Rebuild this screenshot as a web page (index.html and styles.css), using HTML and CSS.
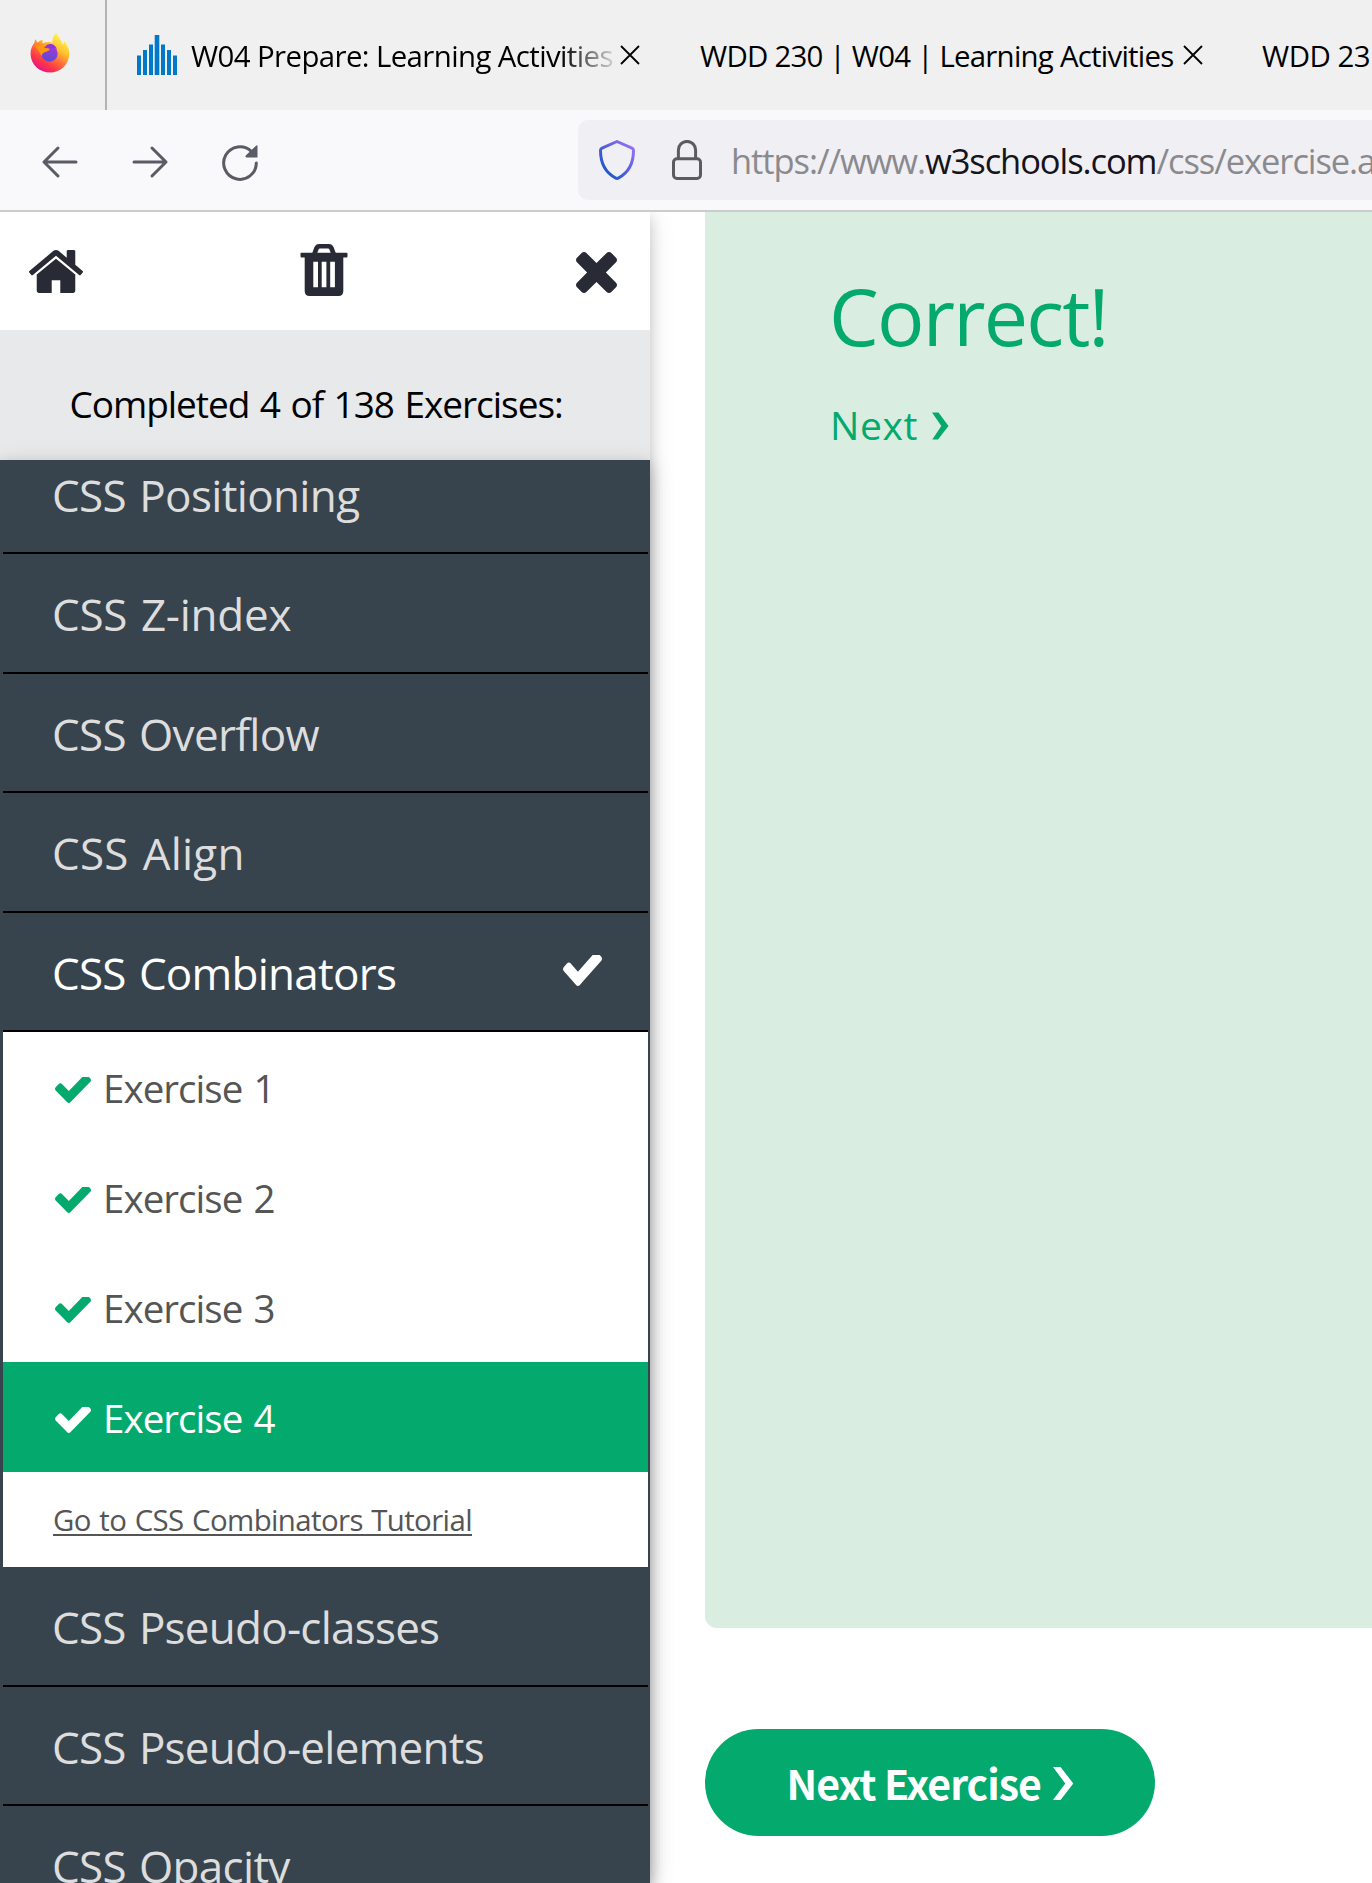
FILE: index.html
```html
<!DOCTYPE html>
<html lang="en">
<head>
<meta charset="utf-8">
<title>Exercise</title>
<link rel="stylesheet" href="styles.css">
</head>
<body>
<svg class="defs" width="0" height="0" aria-hidden="true">
  <symbol id="check" viewBox="121 434 1550 1088" preserveAspectRatio="none">
    <path d="M1671 566q0 40-28 68L919 1358l-136 136q-28 28-68 28t-68-28L511 1358 149 996q-28-28-28-68t28-68l136-136q28-28 68-28t68 28l294 295 656-657q28-28 68-28t68 28l136 136q28 28 28 68z"/>
  </symbol>
</svg>

<nav class="tabs">
  <div class="pinned">
    <svg width="40" height="40" viewBox="0 0 40 40">
      <defs>
        <linearGradient id="fox" x1=".8" y1=".1" x2=".25" y2=".95">
          <stop offset="0" stop-color="#fff44f"/><stop offset=".3" stop-color="#ffc22e"/><stop offset=".55" stop-color="#ff7139"/><stop offset=".78" stop-color="#ff3647"/><stop offset="1" stop-color="#e31587"/>
        </linearGradient>
        <linearGradient id="globe" x1=".7" y1="0" x2=".4" y2="1">
          <stop offset="0" stop-color="#a737dd"/><stop offset="1" stop-color="#5a4bd0"/>
        </linearGradient>
      </defs>
      <path fill="url(#fox)" d="M26 0c2 3 5 6 6.500 11.500 1.200-.6 1.500-1.800 1.300-3.500C37.500 11.500 39.500 16 39.300 21 39 31.500 30.500 39.500 20 39.500S.6 31.500.6 21C.6 15.500 2.500 12.500 4.500 9.500 4.600 8 5 7 5.500 6.300L7.500 9.500C9 8.300 10.500 7.200 12.500 7v3.500c4-2 8.500-1.500 10-.8C22 6 23.500 2.500 26 0z"/>
      <circle cx="19.500" cy="20.500" r="8.200" fill="url(#globe)"/>
      <path fill="#ff980e" d="M5 12l8-1c-.5 2 .5 3.500 2.500 4l4.500.6c-.5 2-2 2.600-4.500 3.400-2 .8-3.500 1.500-3.800 4z"/>
      <path fill="#8f35d8" d="M16 12.500c4-3 9-1.500 11 3.500-3-2-5.500-1-8-.5z"/>
    </svg>
  </div>
  <div class="tab tab-first">
    <svg class="favicon" width="40" height="40" viewBox="0 0 40 40" fill="#0079cb">
      <path d="M0 20.500h4V40H0zM6 15h4v25H6zM12 9.500h4V40h-4zM17.700 0h4.600v40h-4.600zM24 9.500h4V40h-4zM30 15h4v25h-4zM36 20.500h4V40h-4z"/>
    </svg>
    <span class="tab-title fade">W04 Prepare: Learning Activities</span>
    <svg class="close" width="20" height="20" viewBox="0 0 20 20"><path d="M1 1l18 18M19 1L1 19"/></svg>
  </div>
  <div class="tab tab-second">
    <span class="tab-title wide">WDD 230 | W04 | Learning Activities</span>
    <svg class="close" width="20" height="20" viewBox="0 0 20 20"><path d="M1 1l18 18M19 1L1 19"/></svg>
  </div>
  <div class="tab tab-third"><span class="tab-title">WDD 23</span></div>
</nav>

<header class="toolbar">
  <div class="buttons">
    <svg width="36" height="36" viewBox="0 0 36 36"><path d="M16 4L2 18l14 14M2 18h32"/></svg>
    <svg width="36" height="36" viewBox="0 0 36 36"><path d="M20 4l14 14-14 14M34 18H2"/></svg>
    <svg width="36" height="36" viewBox="0 0 36 36"><path d="M29.300 7.300A16.300 16.300 0 1 0 34.300 19"/><path class="solid" d="M35.500 1.500V13.500H24.500q-2-.5-.5-2.200L34 1.800q1-.8 1.500-.3z"/></svg>
  </div>
  <div class="urlbar">
    <svg class="shield" width="36" height="40" viewBox="0 0 36 40">
      <defs><linearGradient id="sh" x1=".9" y1=".1" x2=".2" y2=".8"><stop offset="0" stop-color="#9470f5"/><stop offset=".5" stop-color="#5d60e2"/><stop offset="1" stop-color="#2558cc"/></linearGradient></defs>
      <path fill="none" stroke="url(#sh)" stroke-width="3" stroke-linejoin="round" d="M18 1.500l15 6.600q1.500.7 1.500 2.400C34.500 24 29 33 19.200 38.100q-1.200.6-2.400 0C7 33 1.500 24 1.500 10.500q0-1.700 1.500-2.400z"/>
    </svg>
    <svg class="lock" width="30" height="40" viewBox="0 0 30 40"><path d="M6.400 18V10a8.600 8.600 0 0 1 17.200 0v8"/><rect x="1.500" y="18.800" width="27" height="19.700" rx="3.500"/></svg>
    <span class="url">https://www.<b>w3schools.com</b>/css/exercise.a</span>
  </div>
</header>

<div class="page">
  <aside class="sidebar">
    <div class="tools">
      <svg width="54" height="43" viewBox="89 253 1614 1283" preserveAspectRatio="none"><path d="M1472 992v480q0 26-19 45t-45 19h-384v-384H768v384H384q-26 0-45-19t-19-45V992q0-1 .5-3t.5-3l575-474 575 474q1 2 1 6zm223-69l-62 74q-8 9-21 11h-3q-13 0-21-7L896 424l-692 577q-12 8-24 7-13-2-21-11l-62-74q-8-10-7-23.500T101 878l719-599q32-26 76-26t76 26l244 204V288q0-14 9-23t23-9h192q14 0 23 9t9 23v408l219 182q10 8 11 21.500t-7 23.500z"/></svg>
      <svg class="trash" width="48" height="52" viewBox="0 0 48 52"><path fill-rule="evenodd" d="M1 8.700H12.300L14.500 3Q16 0 19 0H29Q32 0 33.500 3L35.700 8.700H46.500Q47.500 8.700 47.500 9.700V12.500Q47.500 13.500 46.500 13.500H43.300V47Q43.300 52 38.500 52H9.500Q4.700 52 4.700 47V13.500H1.500Q.5 13.500.5 12.500V9.700Q.5 8.700 1 8.700zM17.300 8.700H30.700L29.300 5.200Q29 4.500 28 4.500H20Q19 4.500 18.700 5.200zM13.300 17.700V43.300H18V17.700zM21.700 17.700V43.300H26.400V17.700zM30.200 17.700V43.300H34.900V17.700z"/></svg>
      <svg class="times" width="41" height="41" viewBox="302 366 1188 1188"><path d="M1490 1322q0 40-28 68l-136 136q-28 28-68 28t-68-28L896 1232l-294 294q-28 28-68 28t-68-28l-136-136q-28-28-28-68t28-68l294-294-294-294q-28-28-28-68t28-68l136-136q28-28 68-28t68 28l294 294 294-294q28-28 68-28t68 28l136 136q28 28 28 68t-28 68l-294 294 294 294q28 28 28 68z"/></svg>
    </div>
    <div class="progress">Completed 4 of 138 Exercises:</div>
    <div class="list">
      <div class="items">
        <a class="topic positioning">CSS Positioning</a>
        <a class="topic zindex">CSS Z-index</a>
        <a class="topic overflow">CSS Overflow</a>
        <a class="topic align">CSS Align</a>
        <a class="topic active">CSS Combinators<svg width="39" height="31"><use href="#check"/></svg></a>
        <div class="sub">
          <a class="exercise"><svg width="36" height="26"><use href="#check"/></svg>Exercise 1</a>
          <a class="exercise"><svg width="36" height="26"><use href="#check"/></svg>Exercise 2</a>
          <a class="exercise"><svg width="36" height="26"><use href="#check"/></svg>Exercise 3</a>
          <a class="exercise current"><svg width="36" height="26"><use href="#check"/></svg>Exercise 4</a>
          <a class="tutorial"><span>Go to CSS Combinators Tutorial</span></a>
        </div>
        <a class="topic">CSS Pseudo-classes</a>
        <a class="topic">CSS Pseudo-elements</a>
        <a class="topic overflow">CSS Opacity</a>
      </div>
    </div>
  </aside>
  <main class="content">
    <section class="result">
      <h2>Correct!</h2>
      <a class="next">Next<svg width="17" height="28" viewBox="0 0 17 28"><path d="M0 .5h6.500L16.500 14 6 27.500H.3L9.300 14z"/></svg></a>
    </section>
    <a class="next-exercise">Next Exercise<svg width="21" height="33" viewBox="0 0 21 33"><path d="M0 0h7.500L20.300 16.500 7.500 33H0L12.300 16.500z"/></svg></a>
  </main>
</div>
</body>
</html>
```
FILE: styles.css
```css
* { box-sizing: border-box; }

body {
  margin: 0;
  width: 1372px;
  height: 1883px;
  overflow: hidden;
  display: flex;
  flex-direction: column;
  background: #fff;
  color: #000;
  font-family: "Open Sans", "Noto Sans", sans-serif;
}

svg { display: block; flex: none; }
.defs { position: absolute; }

/* Browser tabs */
.tabs {
  display: flex;
  flex: none;
  height: 110px;
  background: #f0f0f0;
  overflow: hidden;
}
.pinned {
  flex: none;
  width: 107px;
  padding: 33px 0 0 30px;
  border-right: 2px solid #b3b3b3;
}
.tab {
  display: flex;
  flex: none;
  align-items: center;
  font-size: 29.4px;
  line-height: 108px;
  white-space: nowrap;
}
.tab-first { width: 569px; padding-left: 30px; }
.tab-second { width: 563px; padding-left: 24px; }
.tab-third { padding-left: 23px; letter-spacing: -0.5px; }
.favicon { margin-right: 14px; }
.tab-title { padding-top: 2px; }
.tab-title.fade {
  width: 426px;
  margin-right: 3px;
  overflow: hidden;
  letter-spacing: -0.6px;
  -webkit-mask-image: linear-gradient(to right, #000 370px, transparent 430px);
  mask-image: linear-gradient(to right, #000 370px, transparent 430px);
}
.tab-title.wide { width: 483px; letter-spacing: -0.75px; }
.close { fill: none; stroke: #000; stroke-width: 1.8; }

/* Navigation toolbar */
.toolbar {
  display: flex;
  flex: none;
  height: 102px;
  background: #f9f9fb;
  border-bottom: 2px solid #ccc;
}
.buttons {
  display: flex;
  gap: 54px;
  width: 578px;
  flex: none;
  padding: 33.5px 0 0 42px;
}
.buttons svg { fill: none; stroke: #5b5b66; stroke-width: 3; stroke-linecap: round; stroke-linejoin: round; overflow: visible; }
.buttons .solid { fill: #5b5b66; stroke: none; }
.urlbar {
  display: flex;
  align-items: center;
  flex: 1;
  min-width: 0;
  height: 80px;
  margin-top: 10px;
  padding-left: 21px;
  background: #f0eff4;
  border-radius: 10px 0 0 10px;
  overflow: hidden;
}
.lock { margin: 0 29px 0 37px; fill: none; stroke: #5b5b60; stroke-width: 3; }
.url {
  color: #8a8a8e;
  font-size: 34.5px;
  line-height: 78px;
  letter-spacing: -1.08px;
  white-space: nowrap;
  padding-top: 2px;
}
.url b { font-weight: 400; color: #15141a; }

/* Page */
.page { display: flex; flex: 1; min-height: 0; overflow: hidden; }

.sidebar {
  display: flex;
  flex-direction: column;
  flex: none;
  width: 650px;
  background: #fff;
  box-shadow: 0 5px 13px rgba(0, 0, 0, .16), 0 5px 25px rgba(0, 0, 0, .12);
}
.tools {
  display: flex;
  justify-content: space-between;
  align-items: center;
  flex: none;
  height: 118px;
  padding: 0 33px 0 29px;
  fill: #282a35;
}
.trash { margin-left: -11px; margin-top: -2px; }
.times { margin-top: 2px; }
.progress {
  flex: none;
  height: 130px;
  padding: 17px 0 0 69.5px;
  background: #e7e9eb;
  font-size: 37px;
  line-height: 113px;
  letter-spacing: -1.05px;
  word-spacing: 2px;
  white-space: nowrap;
}
.list {
  flex: 1;
  min-height: 0;
  padding: 0 2px 0 3px;
  background: #38444d;
  overflow: hidden;
  box-shadow: 0 5px 13px rgba(0, 0, 0, .16), 0 5px 25px rgba(0, 0, 0, .12);
}
.items { margin-top: -25.5px; }
.topic {
  display: flex;
  justify-content: space-between;
  height: 119.5px;
  padding: 2px 46px 0 49px;
  border-bottom: 2px solid #000;
  color: #ddd;
  font-size: 44px;
  line-height: 117px;
  letter-spacing: -0.75px;
  word-spacing: 2.5px;
  white-space: nowrap;
}
.topic svg { margin-top: 40px; fill: #fff; }
.positioning { letter-spacing: -0.65px; }
.zindex { letter-spacing: -0.25px; }
.overflow { letter-spacing: -0.7px; }
.align { letter-spacing: 0.2px; }
.active { color: #fff; }

.sub { background: #fff; color: #555; }
.exercise {
  display: flex;
  align-items: center;
  height: 110px;
  padding: 2px 0 0 52px;
  font-size: 38.5px;
  line-height: 108px;
  letter-spacing: -0.95px;
  word-spacing: 2px;
}
.exercise svg { margin: 3px 12px 0 0; fill: #04aa6d; }
.current { background: #04aa6d; color: #fff; }
.exercise.current svg { fill: #fff; }
.tutorial {
  display: block;
  height: 95px;
  padding: 2px 0 0 50px;
  font-size: 29.4px;
  line-height: 93px;
  letter-spacing: -0.6px;
  word-spacing: 1.4px;
}
.tutorial span {
  text-decoration: underline;
  text-decoration-thickness: 2px;
  text-underline-offset: 3px;
  text-decoration-skip-ink: none;
}

.content {
  flex: 1;
  min-width: 0;
  padding-left: 55px;
  display: flex;
  flex-direction: column;
  align-items: flex-start;
}
.result {
  width: 100%;
  height: 1416px;
  padding: 50px 0 0 124px;
  background: #d9ede1;
  border-radius: 0 0 0 12px;
  color: #04aa6d;
}
.result h2 {
  margin: 0;
  font-weight: 400;
  font-size: 79px;
  line-height: 108px;
  letter-spacing: -1.8px;
}
.next {
  display: flex;
  align-items: center;
  height: 110px;
  padding-left: 1px;
  font-size: 39px;
  line-height: 110px;
  letter-spacing: 0.6px;
}
.next svg { margin: 2px 0 0 14px; fill: #04aa6d; }
.next-exercise {
  display: flex;
  align-items: center;
  width: 450px;
  height: 107px;
  margin-top: 101px;
  padding-left: 81.5px;
  border-radius: 53.5px;
  background: #04aa6d;
  color: #fff;
  font-family: "Noto Sans CJK SC", sans-serif;
  font-weight: 700;
  font-size: 41px;
  line-height: 105px;
  letter-spacing: -0.95px;
  white-space: nowrap;
}
.next-exercise svg { margin: 1px 0 0 12px; fill: #fff; }
```
